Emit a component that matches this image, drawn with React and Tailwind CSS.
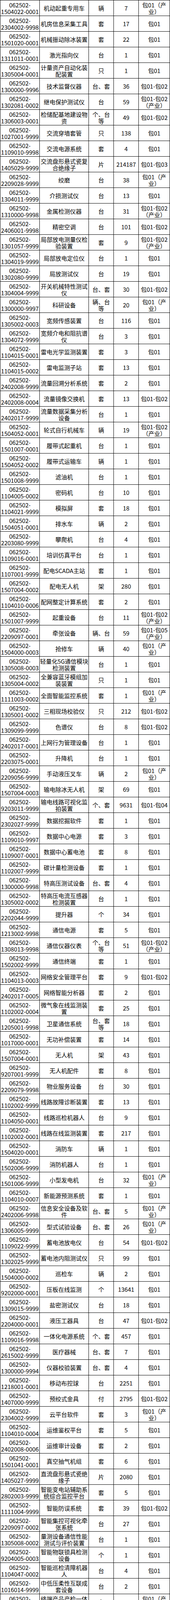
const rows = [
  ["1504022-0001", "机动起重专用车", "辆", "7", "包01（产|业）"],
  ["2304002-9998", "机房信息采集工具", "套", "17", "包01"],
  ["1501020-0001", "机械振动除冰装置", "套", "22", "包01"],
  ["1311011-0001", "激光指向仪", "台", "1", "包01"],
  ["1305004-0001", "计量资产自动化装|配装置", "只", "1", "包01"],
  ["1300000-9996", "技术监督仪器", "台、套", "36", "包01-包02"],
  ["1302081-0002", "继电保护测试仪", "台", "59", "包01-包02|（产业）"],
  ["1306003-0001", "检储配基地建设物|资", "个、台|等", "49", "包01-包02"],
  ["1027001-9999", "交流穿墙套管", "只", "138", "包01"],
  ["1109010-9998", "交流电源系统", "套", "4", "包01"],
  ["1405029-9999", "交流盘形悬式瓷复|合绝缘子", "片", "214187", "包01-包03"],
  ["2209028-9999", "绞磨", "台", "38", "包01（产|业）"],
  ["1304011-9999", "介损测试仪", "台", "13", "包01"],
  ["1310000-9998", "金属检测仪器", "台", "31", "包01-包02|（产业）"],
  ["2406001-9998", "精密空调", "台", "101", "包01-包02"],
  ["1301057-9999", "局部放电测量仪检|验装置", "套", "9", "包01-包02|（产业）"],
  ["1304019-9999", "局部放电定位仪", "台", "1", "包01"],
  ["1302080-9999", "局放测试仪", "台", "19", "包01"],
  ["1304004-9999", "开关机械特性测试|仪", "台、套", "30", "包01-包02"],
  ["1300000-9997", "科研设备", "辆、台|等", "20", "包01（产|业）"],
  ["1305002-0003", "宽频传感装置", "台", "116", "包01"],
  ["1304072-9999", "宽频介电和阻抗谱|仪", "台", "3", "包01"],
  ["1104015-0001", "雷电光学监测装置", "套", "3", "包01"],
  ["1104015-0002", "雷电监测子站", "套", "13", "包01"],
  ["2402008-9999", "流量回溯分析系统", "套", "2", "包01"],
  ["2402008-0004", "流量镜像交换机", "套", "13", "包01-包02"],
  ["2402017-9999", "流量数据采集分析|设备", "台", "1", "包01"],
  ["1504052-0001", "轮式自行机械车", "辆", "19", "包01-包02|（产业）"],
  ["1501007-0001", "履带式起重机", "台", "1", "包01"],
  ["1504052-0002", "履带式运输车", "辆", "1", "包01"],
  ["1501008-9999", "滤油机", "台", "1", "包01"],
  ["1104005-0002", "密码机", "台", "10", "包01"],
  ["1104021-9999", "模拟屏", "套", "18", "包01"],
  ["1504051-0001", "排水车", "辆", "2", "包01"],
  ["2203080-9999", "攀爬机", "台", "4", "包01"],
  ["1109016-0001", "培训仿真平台", "台", "1", "包01"],
  ["1107001-9999", "配电SCADA主站", "套", "1", "包01"],
  ["1507004-0002", "配电无人机", "架", "280", "包01"],
  ["1104010-0006", "配网整定计算系统", "套", "2", "包01"],
  ["1501007-9999", "起重设备", "台", "11", "包01-包02|（产业）"],
  ["2209097-0001", "牵张设备", "辆、台", "59", "包01-包05|（产业）"],
  ["1504000-0003", "抢修车", "辆", "40", "包01（产|业）"],
  ["1305008-0003", "轻量化5G通信模块|检测装置", "台", "1", "包01"],
  ["1305004-0002", "全兼容蓝牙模组加|装装置", "只", "1", "包01"],
  ["1111003-0002", "全面智能监控系统", "套", "1", "包01（产|业）"],
  ["1305001-0002", "三相现场校验仪", "只", "212", "包01-包02"],
  ["1309099-9999", "色谱仪", "台", "8", "包01-包02"],
  ["2402017-0001", "上网行为管理设备", "台", "1", "包01"],
  ["2203075-0001", "升降机", "台", "1", "包01"],
  ["2209056-9999", "手动液压叉车", "辆", "2", "包01（产|业）"],
  ["1507004-0003", "输电除冰无人机", "架", "69", "包01"],
  ["9203011-9999", "输电线路可视化监|拍装置", "个、套", "9631", "包01-包04"],
  ["2302027-9999", "数据挖掘软件", "套", "1", "包01"],
  ["1109010-9997", "数据中心电源", "套", "3", "包01"],
  ["1109007-0001", "数据中心蓄电池", "套", "8", "包01"],
  ["1102007-9999", "碳计量检测设备", "套", "1", "包01"],
  ["1300000-9998", "特高压测试设备", "台、套", "4", "包01"],
  ["1305002-0002", "特高压电流互感器|检测装置", "台", "1", "包01"],
  ["2202044-9999", "提升器", "个", "34", "包01"],
  ["1213002-9998", "通信电源", "套", "5", "包01"],
  ["1308013-9998", "通信仪器仪表", "个、台|等", "51", "包01-包02|（产业）"],
  ["1502002-9999", "通信终端", "套", "1", "包01"],
  ["1104013-0003", "网络安全管理平台", "套", "9", "包01-包02"],
  ["2402017-0005", "网络智能分析器", "套", "2", "包01"],
  ["1102002-0004", "微气象在线监测装|置", "套", "25", "包01"],
  ["1205001-9998", "卫星通信系统", "台、套|等", "18", "包01"],
  ["1017000-0001", "无功补偿装置", "套", "14", "包01"],
  ["1507004-0001", "无人机", "架", "43", "包01"],
  ["9207001-9999", "无人机配件", "套", "8", "包01"],
  ["2209079-9998", "物业服务设备", "台", "30", "包01"],
  ["1102002-9999", "线路故障诊断装置", "套", "13", "包01"],
  ["1104050-0001", "线路巡检机器人", "台", "9", "包01"],
  ["1102002-0001", "线路在线监测装置", "套", "217", "包01"],
  ["1504020-0001", "消防车", "辆", "1", "包01"],
  ["1502006-9999", "消防机器人", "台", "1", "包01"],
  ["1501006-9999", "小型发电机", "台", "32", "包01（产|业）"],
  ["1104010-0007", "新能源预测系统", "套", "1", "包01"],
  ["2402006-9998", "信息安全设备及软|件", "台、套", "5", "包01（产|业）"],
  ["1306005-9999", "型式试验设备", "台、套", "26", "包01（产|业）"],
  ["1109022-9999", "蓄电池放电仪", "台", "54", "包01-包02"],
  ["1302025-9999", "蓄电池内阻测试仪", "只", "99", "包01"],
  ["1504000-0002", "巡检车", "辆", "2", "包01"],
  ["9202000-0001", "压板在线监测", "个", "13641", "包01"],
  ["1309015-9999", "盐密测试仪", "台", "18", "包01"],
  ["2204000-0001", "液压工器具", "台", "47", "包01-包02"],
  ["1109016-9998", "一体化电源系统", "个、套", "457", "包01"],
  ["2615002-9999", "医疗器械", "台、套", "7", "包01"],
  ["1300000-9994", "仪器校验装置", "台、套", "4", "包01"],
  ["1218001-0001", "移动布控球", "台", "2251", "包01"],
  ["1407000-9999", "预绞式金具", "付", "2795", "包01-包02"],
  ["2304002-9999", "云平台软件", "套", "3", "包01（产|业）"],
  ["1104010-0004", "运维鉴权平台", "套", "5", "包01"],
  ["2402008-0006", "运维审计设备", "套", "2", "包01"],
  ["1501041-0001", "真空抽气机组", "套", "6", "包01"],
  ["1405027-9999", "直流盘形悬式瓷绝|缘子", "片", "2080", "包01"],
  ["2802003-9999", "智能变电站辅助系|统综合监控平台", "套", "5", "包01"],
  ["1111004-9999", "智能防误系统", "套", "39", "包01-包02"],
  ["2209097-0002", "智能集控可视化牵|张系统", "台", "27", "包01"],
  ["1305008-0002", "量测设备通信性能|测试与评价装置", "台", "1", "包01"],
  ["9204005-0003", "智能物联锁具检测|设备", "个", "1", "包01"],
  ["1104047-0002", "智能巡检清障机器|人", "台", "4", "包01"],
  ["1016014-9999", "中低压柔性互联成|套设备", "台", "2", "包01"],
  ["1111003-0003", "终端产品产检一体|化系统", "套", "1", "包01（产|业）"],
  ["1305008-0004", "终端全功能检测装|置", "台", "1", "包01"],
  ["1408019-9998", "主变低压侧绝缘材|料", "卷、米|等", "25868", "包01-包02"],
  ["2613001-9999", "主控桌", "张", "4", "包01"],
  ["1111003-9999", "主设备全面监视系|统", "套", "1", "包01"],
  ["1104010-0005", "主网整定计算系统", "套", "6", "包01"],
  ["1104000-9998", "主站安全防护设备", "台、套", "3", "包01"],
  ["1304088-0001", "紫外线成像仪", "台", "2", "包01"],
  ["1501046-9999", "自动仓储机", "台", "1", "包01"],
  ["2615000-9998", "自动体外除颤器", "个、台", "82", "包01"],
  ["1407000-9998", "阻尼线线夹", "套、支", "5642", "包01"],
  ["9201000-0002", "组合电器内电流互|感器", "台", "6", "包01"],
  ["1402004-9999", "组合电器内电压互|感器", "台", "3", "包01"],
];

const widths = ["w-[101px]", "w-[126px]", "w-[64px]", "w-[64px]", "w-[80px]"];

// one cell: "|" marks the line break seen in the original sheet
function Cell({ text, width }) {
  return (
    <div className={`${width} shrink-0 border-r border-black flex flex-col items-center justify-center text-center whitespace-nowrap overflow-hidden`}>
      {text.split("|").map((line, i) => (
        <span key={i} className="block leading-[17px]">{line}</span>
      ))}
    </div>
  );
}

export default function App() {
  return (
    <div className="w-[436px] bg-white text-black text-[15px] leading-[17px] font-['Noto_Sans_CJK_SC',sans-serif]">
      <div className="border-l border-t border-black">
        {rows.map((r) => (
          <div key={r[0] + r[1]} className="flex h-10 border-b border-black">
            <Cell text={"062502-|" + r[0]} width={widths[0]} />
            <Cell text={r[1]} width={widths[1]} />
            <Cell text={r[2]} width={widths[2]} />
            <Cell text={r[3]} width={widths[3]} />
            <Cell text={r[4]} width={widths[4]} />
          </div>
        ))}
      </div>
    </div>
  );
}
